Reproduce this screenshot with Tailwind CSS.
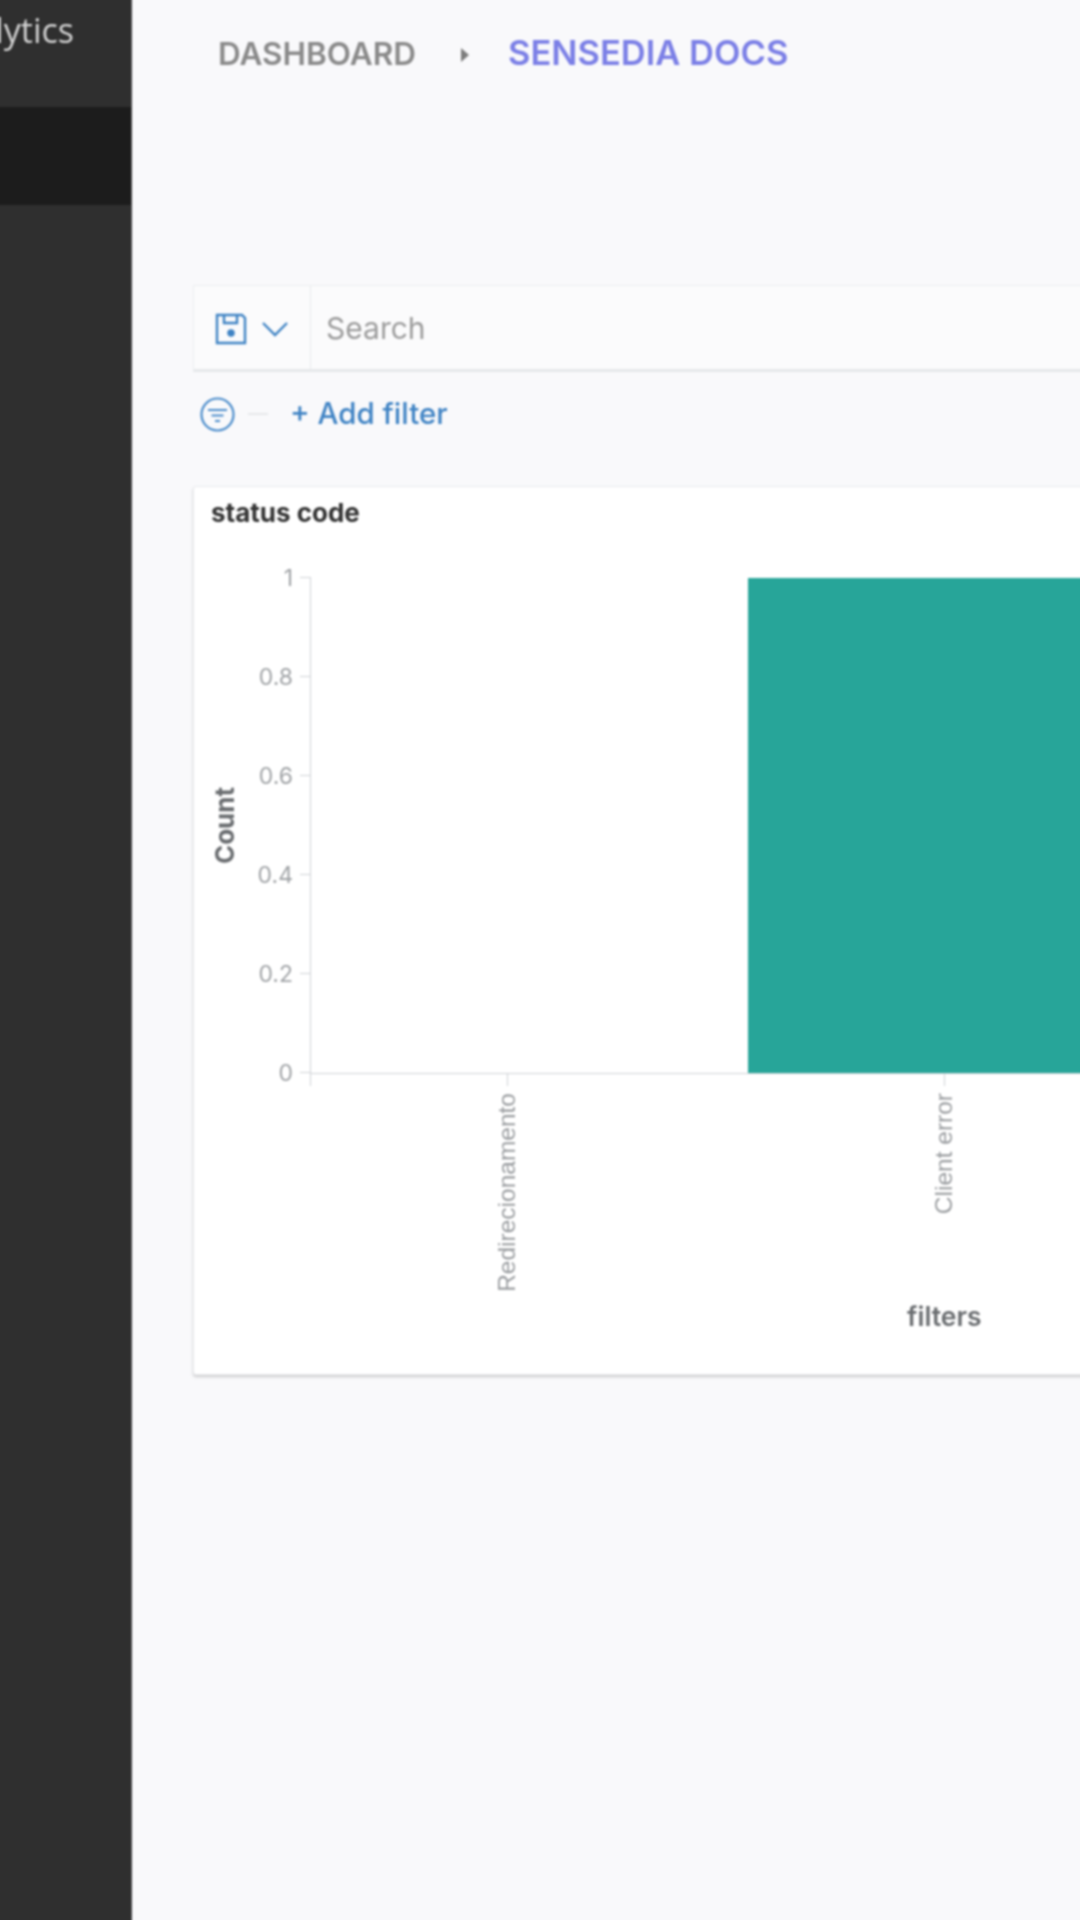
<!DOCTYPE html>
<html lang="en">
  <head>
    <meta charset="UTF-8" />
    <title>Sensedia Docs</title>
    <script src="https://cdn.jsdelivr.net/npm/@tailwindcss/browser@4"></script>
  </head>
  <body class="overflow-hidden">
    <!-- 10px bleed on every side so the blur doesn't fade the page edges -->
    <div class="flex w-[1100px] h-[1940px] -m-[10px] overflow-hidden bg-[#f9f9fb] font-['Inter',sans-serif] blur-[0.8px]">
      <!-- sidebar -->
      <aside class="w-[142px] shrink-0 bg-[#2f2f2f] border-r border-[#4a4a4a] overflow-hidden">
        <div class="h-[117px] flex justify-end pt-[20px] pr-[57px]">
          <span class="text-[34px] leading-[40px] text-[#d2d2d2] font-['Open_Sans',sans-serif] whitespace-nowrap">Analytics</span>
        </div>
        <div class="h-[98px] bg-[#1c1c1c]"></div>
      </aside>

      <main class="flex-1 min-w-0 pl-[61px] pt-[10px]">
        <!-- breadcrumb -->
        <div class="h-[107px] pl-[25px] pt-[36px] flex items-start font-semibold whitespace-nowrap">
          <span class="text-[31.5px] leading-[36px] text-[#8a8a8a]">DASHBOARD</span>
          <svg class="w-[10px] h-[16px] mt-[11px] ml-[44px]" viewBox="0 0 10 16"><path d="M1 1l8 7-8 7z" fill="#7d7d7d"/></svg>
          <span class="text-[34.5px] leading-[36px] text-[#7b7fe6] ml-[38px] -mt-[1px]">SENSEDIA DOCS</span>
        </div>

        <!-- search bar -->
        <div class="mt-[178px] h-[87px] flex bg-[#fbfbfc] border border-[#eceef0] border-b-[3px] border-b-[#e6e8ea] w-[1000px]">
          <div class="w-[117px] shrink-0 flex items-center pl-[21px] pt-[2px] border-r border-[#e8eaec]">
            <svg class="w-[32px] h-[32px]" viewBox="0 0 32 32" fill="none" stroke="#3f83c4" stroke-width="2.4">
              <path d="M2 2h25l3 3v25H2z"/>
              <path d="M9 2v8h13V2"/>
              <circle cx="16" cy="20" r="2.6" fill="#3f83c4"/>
            </svg>
            <svg class="w-[28px] h-[16px] ml-[14px]" viewBox="0 0 28 16" fill="none" stroke="#3f83c4" stroke-width="2.4"><path d="M2 2l12 12L26 2"/></svg>
          </div>
          <div class="flex items-center pl-[15px] pt-[2px] text-[30px] text-[#9c9c9c]">Search</div>
        </div>

        <!-- filter row -->
        <div class="h-[84px] flex items-center pl-[7px]">
          <svg class="w-[35px] h-[35px]" viewBox="0 0 35 35" fill="none" stroke="#4a8ccb" stroke-width="2.2">
            <circle cx="17.5" cy="17.5" r="16"/>
            <path d="M8 13h19M11.5 18.5h12M15 24h5"/>
          </svg>
          <div class="w-[20px] h-[2px] bg-[#e6e8ea] ml-[13px]"></div>
          <span class="ml-[22px] text-[29.5px] leading-none font-medium text-[#3f83c4]">+ Add filter</span>
        </div>

        <!-- status code card -->
        <section class="mt-[30px] w-[1000px] h-[889px] bg-white border border-[#e9ebee] shadow-[0_2px_3px_rgba(0,0,0,0.18)] rounded-[3px] pl-[17px]">
          <h2 class="pt-[10px] h-[90px] text-[26px] leading-[32px] font-bold text-[#343434]">status code</h2>
          <div class="flex">
            <!-- y axis title -->
            <div class="w-[26px] h-[496px] flex items-center justify-center pt-[2px]">
              <span class="[writing-mode:vertical-rl] rotate-180 text-[26px] font-bold text-[#6a6d70]">Count</span>
            </div>
            <!-- y axis ticks -->
            <div class="w-[73px] h-[496px] flex flex-col justify-between items-end text-[23px] leading-[0] text-[#a0a3a6]">
              <div class="flex items-center gap-[7px]"><span>1</span><i class="block w-[10px] h-[1px] bg-[#cfd2d6]"></i></div>
              <div class="flex items-center gap-[7px]"><span>0.8</span><i class="block w-[10px] h-[1px] bg-[#cfd2d6]"></i></div>
              <div class="flex items-center gap-[7px]"><span>0.6</span><i class="block w-[10px] h-[1px] bg-[#cfd2d6]"></i></div>
              <div class="flex items-center gap-[7px]"><span>0.4</span><i class="block w-[10px] h-[1px] bg-[#cfd2d6]"></i></div>
              <div class="flex items-center gap-[7px]"><span>0.2</span><i class="block w-[10px] h-[1px] bg-[#cfd2d6]"></i></div>
              <div class="flex items-center gap-[7px]"><span>0</span><i class="block w-[10px] h-[1px] bg-[#cfd2d6]"></i></div>
            </div>
            <!-- plot area -->
            <div class="flex-1 h-[497px] border-l border-b border-[#cfd2d6] flex pt-[1px]">
              <div class="w-[437px] shrink-0"></div>
              <div class="flex-1 bg-[#27a599]"></div>
            </div>
          </div>
          <!-- x axis -->
          <div class="h-[225px] pl-[99px] flex">
            <i class="block w-[1px] h-[12px] bg-[#cfd2d6] shrink-0"></i>
            <div class="w-[196px] shrink-0 flex justify-end">
              <div class="flex flex-col items-center w-[0px]">
                <i class="block w-[1px] h-[12px] bg-[#cfd2d6] shrink-0"></i>
                <span class="mt-[7px] [writing-mode:vertical-rl] rotate-180 text-[24.5px] leading-[24px] text-[#9a9da0] font-['Liberation_Sans',sans-serif] whitespace-nowrap">Redirecionamento</span>
              </div>
            </div>
            <div class="w-[437px] shrink-0 flex justify-end">
              <div class="flex flex-col items-center w-[0px]">
                <i class="block w-[1px] h-[12px] bg-[#cfd2d6] shrink-0"></i>
                <span class="mt-[7px] [writing-mode:vertical-rl] rotate-180 text-[24.5px] leading-[24px] text-[#9a9da0] font-['Liberation_Sans',sans-serif] whitespace-nowrap">Client error</span>
              </div>
            </div>
          </div>
          <div class="pl-[696px] leading-[34px]">
            <span class="text-[26.5px] font-semibold text-[#6a6d70]">filters</span>
          </div>
        </section>
      </main>
    </div>
  </body>
</html>
